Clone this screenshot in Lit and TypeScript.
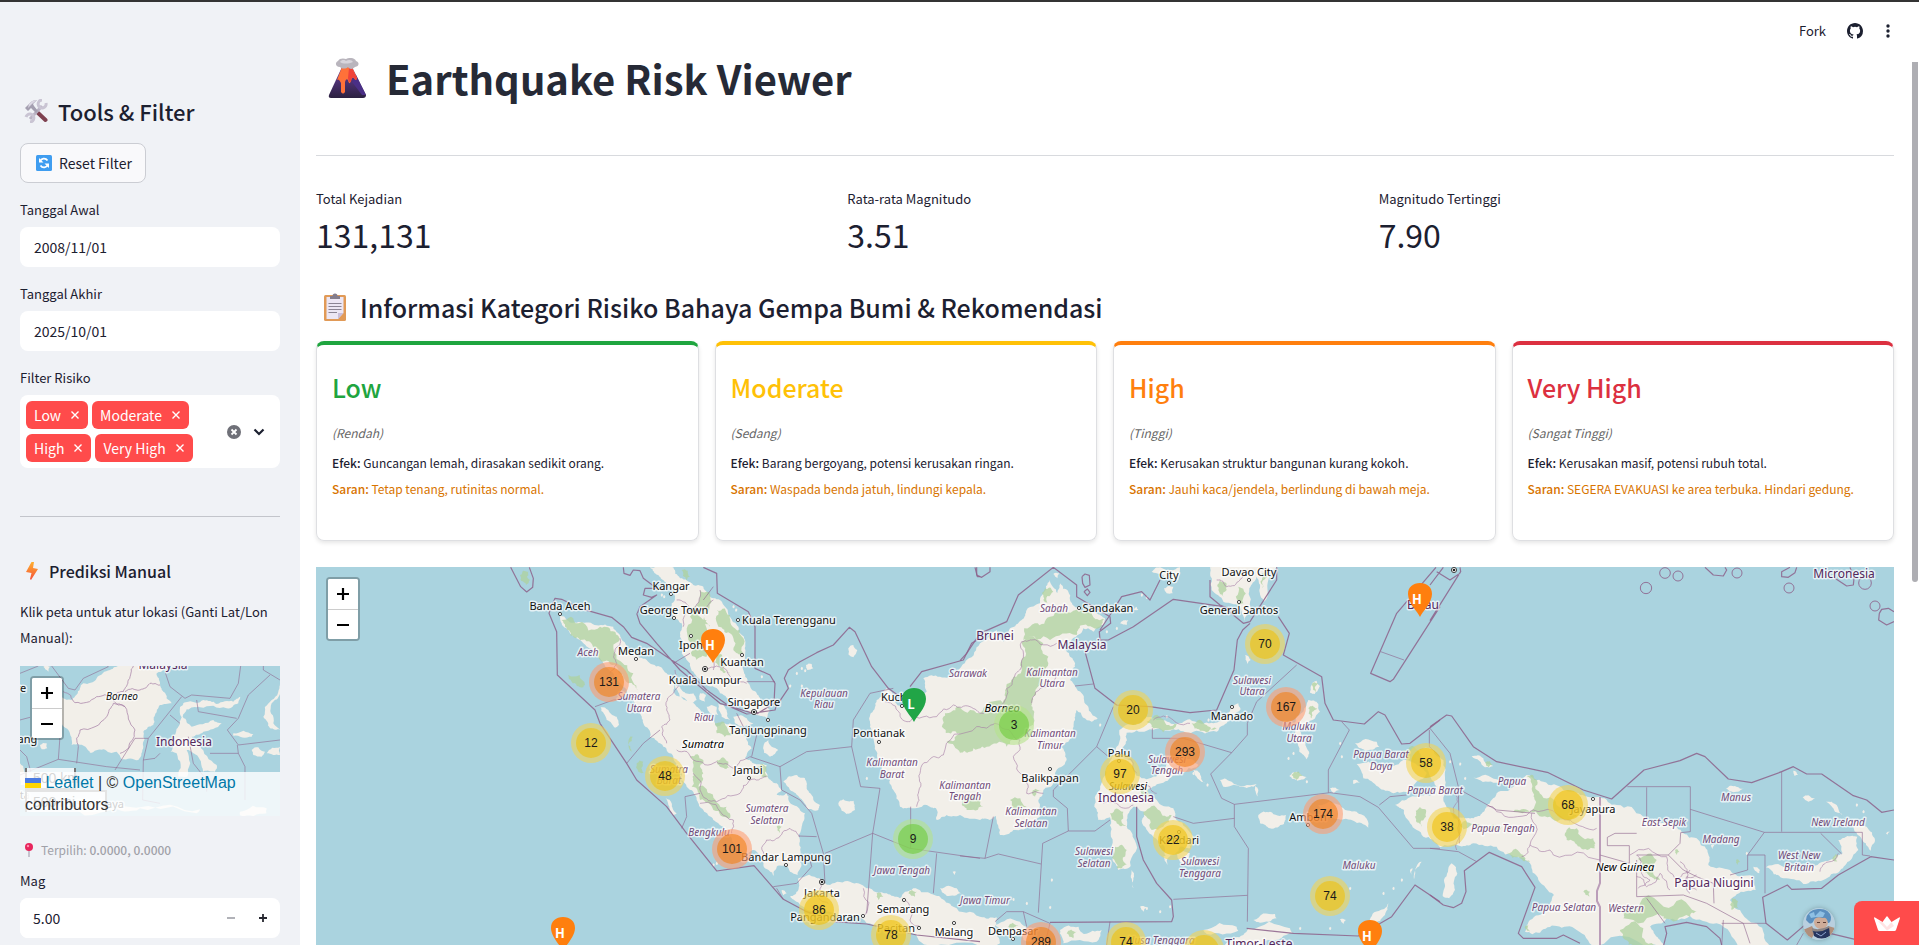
import { LitElement, html, svg, css } from "lit";
import { customElement, state } from "lit/decorators.js";

/* ---------- map geometry helpers ---------- */

// Each sheet is a 3x survey tile; ox/oy is its origin on the map plane.
type Sheet = { ox: number; oy: number };
const WEST: Sheet = { ox: 500, oy: 560 };
const MID: Sheet = { ox: 960, oy: 560 };
const EAST: Sheet = { ox: 1430, oy: 560 };
const CENTER_X = 1105;
const TOP_Y = 567;

const px = (s: Sheet, x: number) => Math.round(s.ox + x / 3 - CENTER_X);
const py = (s: Sheet, y: number) => Math.round(s.oy + y / 3 - TOP_Y);

function parse(points: string): number[][] {
  return points.trim().split(/\s+/).map((p) => p.split(",").map(Number));
}

// Midpoint displacement gives the hand-placed outlines a natural shoreline.
function coast(points: string, closed = true, rough = 0.16): string {
  let pts = parse(points);
  let seed = 7;
  const rnd = () => {
    seed = (seed * 16807) % 2147483647;
    return seed / 2147483647 - 0.5;
  };
  for (let level = 0; level < 3; level++) {
    const next: number[][] = [];
    for (let i = 0; i < pts.length; i++) {
      const a = pts[i];
      next.push(a);
      if (!closed && i === pts.length - 1) break;
      const b = pts[(i + 1) % pts.length];
      const dx = b[0] - a[0];
      const dy = b[1] - a[1];
      if (Math.hypot(dx, dy) < 7) continue;
      const k = rnd() * rough * 2;
      next.push([(a[0] + b[0]) / 2 - dy * k, (a[1] + b[1]) / 2 + dx * k]);
    }
    pts = next;
  }
  return "M" + pts.map((p) => p.map((n) => n.toFixed(1)).join(" ")).join("L") + (closed ? "Z" : "");
}
const line = (points: string) => "M" + parse(points).map((p) => p.join(" ")).join("L");

const land: [Sheet, string[]][] = [
  [WEST, [
    "180,165 200,180 240,186 290,196 340,200 360,225 380,262 400,280 440,300 480,320 500,340 525,360 520,390 555,420 590,440 610,462 640,470 650,500 690,490 720,500 740,540 755,565 735,595 760,610 800,615 805,655 830,670 845,690 830,705 860,700 880,735 915,760 905,800 898,850 900,900 893,945 870,935 860,910 830,920 822,948 790,915 780,890 760,870 730,880 700,850 670,800 640,780 610,750 590,720 560,680 545,640 520,590 490,560 450,530 430,490 420,450 400,420 370,380 340,340 310,310 280,270 250,250 210,220 185,190",
    "450,22 520,22 540,55 580,75 610,80 640,115 660,120 690,170 715,200 735,240 735,290 730,330 745,370 770,400 785,430 810,450 800,475 770,465 740,450 700,425 660,400 620,375 590,350 570,310 545,280 540,230 545,190 520,170 515,130 525,95 500,70 475,45",
    "525,375 550,395 580,400 590,420 570,430 540,410", "600,400 618,405 615,425 598,418",
    "620,440 650,440 655,465 630,460", "655,430 680,450 690,480 665,470", "700,470 740,475 760,490 730,500 705,490",
    "850,665 890,645 915,655 922,690 940,720 960,735 955,750 920,745 900,715 870,690",
    "1015,730 1030,718 1060,722 1065,750 1040,762 1025,752",
    "302,442 325,450 350,470 357,495 345,503 320,480", "497,715 515,730 530,760 520,765 505,735",
    "1045,265 1060,255 1072,270 1060,292 1046,285", "790,560 805,540 815,560 835,570 810,590 792,578",
    "918,315 935,312 940,325 922,330", "790,510 800,508 802,516 791,518",
    "895,955 960,955 990,975 1050,965 1100,985 1160,1000 1200,1015 1215,995 1240,985 1290,1000 1320,1010 1360,1040 1440,1070 1490,1072 1482,1110 1500,1150 1485,1160 1300,1158 1240,1120 1170,1105 1100,1090 1020,1068 950,1055 900,1035 870,1010 895,990",
    "1320,985 1370,985 1385,1000 1340,1008", "845,990 860,1000 850,1006", "1358,935 1368,935 1365,945",
  ]],
  [MID, [
    "-175,440 -195,425 -220,385 -250,420 -268,460 -270,500 -255,560 -245,600 -215,650 -200,690 -180,740 -140,745 -100,735 -72,745 -70,780 -40,765 0,765 60,780 90,780 108,768 120,825 160,810 220,795 240,770 235,720 250,690 280,670 285,640 320,600 300,560 340,520 345,480 350,450 395,485 413,476 385,440 365,400 330,360 345,320 330,290 305,255 345,232 370,205 400,215 432,192 435,175 410,160 360,150 330,120 325,95 300,70 292,100 270,60 250,100 240,130 200,150 185,180 150,205 130,245 110,210 60,250 20,300 0,325 -30,350 -60,350 -110,355 -100,395 -120,430",
    "478,510 520,495 560,470 590,480 640,492 690,478 720,490 760,490 800,470 812,440 835,430 842,448 800,490 770,515 700,515 640,508 560,512 500,518 490,560 478,590 510,600 545,655 600,640 650,595 700,600 715,615 660,640 610,668 562,690 590,720 640,745 650,780 700,830 690,865 660,860 622,895 610,855 580,830 545,782 552,755 520,740 500,780 518,830 512,918 475,930 458,895 452,820 450,772 415,780 403,740 420,690 432,650 452,600 470,560",
    "1045,420 1075,432 1080,455 1050,482 1022,505 1030,540 1048,580 1040,598 1018,575 1005,540 1008,470 1030,455",
    "1052,380 1070,362 1080,378 1064,402 1050,398", "895,765 930,755 978,765 972,792 930,805 900,790",
    "1075,735 1140,735 1190,755 1222,780 1225,803 1180,782 1120,775 1085,765", "780,660 815,665 890,672 880,680 840,680 790,680",
    "885,678 895,690 895,712 888,700", "988,648 1010,635 1045,650 1012,662", "700,630 720,640 735,670 712,655",
    "750,22 950,22 925,60 912,125 898,90 890,50 868,85 870,150 852,190 832,135 790,125 755,90", "575,35 600,22 660,22 655,60 625,55",
    "612,85 640,80 638,100 620,100", "480,190 505,180 500,195", "522,150 530,140 535,150", "280,42 298,40 292,55", "855,285 872,300 862,312",
    "1185,550 1250,545 1258,560 1215,572", "1190,612 1260,620 1330,600 1380,620 1400,640 1350,695 1300,700 1255,680 1210,655",
    "1180,660 1200,668 1180,672", "1110,685 1140,690 1120,700", "610,890 625,890 622,915", "650,880 690,880 685,915 660,905",
    "880,1080 945,1062 950,1075 900,1088", "1225,1085 1262,1050 1285,1030 1275,1065 1240,1095", "1375,910 1385,905 1362,958", "1350,930 1358,925 1355,945",
    "105,1095 180,1085 200,1100 160,1130 125,1115", "185,1105 225,1115 215,1145 190,1140", "300,1110 355,1100 372,1122 425,1110 410,1145 310,1150",
    "730,1110 830,1100 835,1112 740,1122", "865,1105 990,1105 1000,1120 925,1140 860,1155 790,1160 800,1148 850,1125", "1140,1078 1158,1080 1150,1092",
    "515,930 522,950 520,985 516,965", "540,1040 560,1042 550,1055",
  ]],
  [EAST, [
    "-35,570 10,570 40,600 45,660 40,720 60,750 70,775 110,775 150,768 170,738 200,700 250,680 290,645 340,665 400,690 450,705 510,710 560,735 640,770 720,785 760,820 800,835 832,870 835,915 900,930 970,950 977,990 920,1003 900,1020 930,1050 980,1090 1020,1160 925,1160 860,1090 780,1068 710,1075 660,1100 680,1130 700,1160 495,1160 440,1110 380,1098 330,1118 285,1115 300,1080 350,1050 372,1005 325,960 300,910 260,890 200,860 130,850 90,858 30,862 -20,830 -60,790 -78,750 -105,735 -60,712 0,708 20,680 -10,620",
    "65,910 82,940 75,990 58,1015 38,1008 42,960", "1008,922 1080,925 1150,920 1200,900 1238,880 1225,840 1252,828 1282,830 1285,870 1262,900 1230,932 1180,960 1120,972 1060,955",
    "1188,725 1220,735 1260,780 1310,800 1335,840 1322,872 1300,845 1270,800 1215,755", "1118,712 1135,706 1155,715 1135,725", "888,685 915,678 945,685 910,697",
    "125,588 160,595 172,612 190,618 165,622", "130,653 200,658 238,665 190,668", "970,920 990,930 988,940 975,932", "1090,632 1104,645 1094,648", "843,855 853,855 848,868",
    "1368,820 1380,815 1372,824",
  ]],
];

const forest: [Sheet, string[]][] = [
  [WEST, [
    "185,180 235,190 300,200 345,215 355,245 340,260 355,300 400,340 415,390 385,370 350,320 300,300 285,265 240,240 210,215",
    "570,170 590,130 620,180 605,250 620,290 590,300 565,240", "600,90 635,125 630,200 610,180", "650,150 690,165 720,210 730,280 700,270 690,220 655,200",
    "570,590 610,600 610,640 595,680 630,700 680,740 690,775 640,750 600,720 575,680 580,640", "645,490 680,500 720,520 700,525 650,520",
    "650,600 685,605 690,625 660,620", "770,620 800,620 805,650 785,650", "60,45 85,35 90,60 78,75", "205,345 255,375 250,382 215,365", "410,610 430,605 435,640 415,635",
    "648,280 670,300 690,340 660,330", "545,30 570,50 560,60", "388,535 398,530 395,575", "830,800 845,800 840,820", "1225,1000 1250,995 1245,1010", "1130,1000 1150,1010 1135,1020",
  ]],
  [MID, [
    "185,245 250,250 265,290 250,340 228,400 215,430 222,460 180,530 140,560 80,560 30,575 0,578 -40,545 0,520 -50,505 -45,460 -10,440 60,460 130,430 135,390 160,350 185,300",
    "190,240 225,190 270,170 340,152 400,172 432,178 425,198 370,195 350,225 270,240", "255,85 280,95 262,130 250,120",
    "560,485 610,478 650,492 640,508 580,505", "695,490 740,495 770,505 720,512", "550,755 600,752 635,765 610,800 575,810", "450,760 490,755 500,800 470,790",
    "465,860 500,870 500,915 470,925", "540,690 560,685 575,705 555,712", "1055,375 1075,370 1068,398", "1045,445 1072,445 1055,475", "995,645 1035,648 1010,660",
    "1330,570 1380,575 1370,600 1345,600", "1380,740 1398,770 1385,800 1365,770", "5,720 60,720 70,740 20,750", "215,700 245,690 225,710", "150,720 200,740 170,760",
    "780,60 800,90 790,110 775,90", "835,80 850,130 835,140", "905,40 922,50 910,90", "320,1120 350,1115 340,1135", "145,1100 175,1095 160,1115",
  ]],
  [EAST, [
    "290,648 320,660 335,705 395,745 440,765 420,790 360,770 300,755 250,755 315,735 310,700", "405,820 440,805 490,835 495,865 450,860 410,840",
    "90,795 130,790 160,800 220,800 200,810 100,808", "230,878 280,885 300,905 270,895", "625,895 680,900 690,960 660,950 640,920",
    "590,1045 720,1045 700,1070 580,1075", "700,1040 800,1055 780,1070 700,1075", "570,1110 640,1105 672,1155 620,1160 580,1135", "905,1015 925,1045 905,1050",
    "285,1105 295,1095 300,1115", "165,608 190,615 175,622", "1210,890 1225,885 1222,905 1208,900", "460,995 480,995 478,1010", "735,870 748,875 740,885", "918,900 930,905 922,915",
  ]],
];

const seaLines: [Sheet, string[]][] = [
  [WEST, [
    "32,22 62,80 80,96 98,82 100,55 88,22", "150,150 165,115 185,118 240,145 335,172 370,200 395,232 440,250 500,290 560,330 620,390 690,440 740,462 825,450 828,440 865,385 853,355 865,330 900,305 950,278 1000,255 1048,202 1065,215 1115,320 1165,385 1200,410",
    "150,150 147,160 170,215 172,345 285,450 300,490 380,610 410,660 500,740 560,820 650,933 762,917 850,1018 920,1055 1000,1085 1100,1092 1250,1125 1440,1145",
    "410,160 420,190 470,250 540,330 600,380 660,430 760,460", "370,22 372,40 390,46 400,30 420,32 430,55 450,70 470,85 435,85 430,105 455,112 470,105 420,140 412,160",
    "610,22 650,40 652,100 745,155 765,200 765,325 810,345 825,370 822,430 770,462", "1230,380 1265,335 1390,300 1415,250 1440,235", "1425,22 1432,50 1440,50",
  ]],
  [MID, [
    "0,302 20,280 60,220 140,185 175,105 280,22 350,75 350,110 400,140 450,170 452,190 418,215 420,240 445,240 520,200 640,118 790,140 850,190 870,185 950,60 950,22",
    "375,275 405,385 470,435 570,440 690,458 770,450 822,330 832,240 848,210 870,190", "955,170 988,220 970,285 1085,350 1095,430 1120,480 1213,492 1255,455 1275,465 1325,552 1350,550 1440,480",
    "1428,22 1310,160 1232,340 1290,365 1300,358 1440,140", "420,210 450,165 485,110 545,95 570,120 600,60", "50,22 50,45 65,52 90,35 90,22", "366,50 375,42 388,46 390,75 375,82 368,70 366,50", "372,95 382,87 390,97 382,107 372,95",
    "750,60 750,110 780,135 840,160", "270,1087 635,1085 640,1070 635,1020 590,970 550,900 530,830 530,740", "860,1105 1000,1120 1195,1128 1295,1070 1365,975 1440,1025",
  ]],
  [EAST, [
    "0,500 50,465 65,468 130,560 200,605 355,638 460,690 545,717 642,630 750,602 800,580 825,590 895,657 965,668 1055,635 1090,620 1130,642 1175,642 1270,707 1310,720 1355,757 1392,750",
    "0,1005 40,1035 70,1043 95,1030 108,995 103,932 178,877 275,920 315,982 265,1120 280,1135 380,1135 400,1125 450,1150", "700,1160 710,1120 705,1100 770,1087 830,1100 870,1135 875,1155",
    "1392,900 1322,890 1225,945 1175,985 1085,988 1072,975 998,1012 1008,1090 1072,1140 1130,1090 1200,1120 1275,1138", "0,182 92,35 90,22", "0,75 40,22", "20,35 60,60 90,40",
    "825,22 850,45 880,48 890,30 885,22", "1080,22 1055,35 1055,50 1075,52 1095,38 1100,22", "1215,55 1250,78 1270,75 1272,55 1260,22",
    "1348,160 1355,148 1375,145 1392,155", "1348,160 1346,180 1370,195 1392,185",
  ]],
];

const adminLines: [Sheet, string[]][] = [
  [WEST, [
    "285,440 340,420 420,410", "380,610 430,550 480,510", "545,805 560,770 555,710 600,700", "820,980 890,970 935,920 930,900", "520,310 570,280", "640,80 610,120", "740,365 825,365",
    "750,590 840,620 845,690 900,720 935,760 970,880 975,970", "840,620 920,575 1055,560 1060,480 1110,400 1180,385", "1055,560 1082,680 1140,685 1118,820 975,880", "895,828 950,830", "1118,820 1230,865 1440,895",
    "1118,820 1100,1060", "1232,865 1232,740", "1310,880 1300,1000", "710,460 730,500 770,525 755,590", "850,1018 830,985",
  ]],
  [MID, [
    "0,888 75,895 115,882 243,912", "75,895 100,770", "248,850 235,1058", "248,850 325,813 405,813 450,780", "325,813 322,745 280,710 280,690 410,560 460,440", "410,560 445,590", "577,505 577,535 670,535 815,578 752,642 785,715 823,733 1110,698 1200,710 1255,742 1360,865 1440,865",
    "815,578 862,525 862,490 890,425 1010,315", "823,733 823,800 865,865 862,1085", "823,775 700,790 640,770", "640,1018 862,1006", "1105,698 1105,630 1168,510 1145,485", "1258,735 1290,710 1340,705", "1408,510 1408,560 1440,590", "1262,275 1332,300", "345,378 400,372",
    "105,1085 140,1055 190,1055 270,1090 260,1130", "450,1085 440,1155", "190,1055 200,1100",
  ]],
  [EAST, [
    "0,505 60,580 85,680 88,850", "100,695 200,750 315,760", "592,680 781,680 781,815 752,818 750,850 715,885 620,885", "650,682 650,775", "781,748 1003,817 1297,817 1297,885 1320,888", "1055,635 1055,815", "1003,817 953,885 1005,885 1005,1000",
    "953,885 953,930 900,945", "1172,820 1235,882", "0,865 85,875 140,905", "650,1015 705,1090", "875,1090 1008,1090", "620,820 555,820 532,832 532,857 598,857 598,910 510,885", "620,900 620,1010 760,1005 830,1030 940,1090 960,1150", "875,1160 880,1080",
    "715,885 760,930 800,950 850,970 852,1030", "1120,1120 1100,1155",
  ]],
];

const innerLines: [Sheet, string[]][] = [
  [WEST, [
    "360,235 345,270 350,310 330,340", "525,330 520,400 500,450 510,480 485,500 500,550", "530,570 580,600 650,605 700,625 750,590", "580,640 600,690 650,725 720,700 750,660 800,650", "600,730 680,770 700,780 695,820",
    "790,890 800,840 830,835 870,805 900,830", "530,120 570,150 640,120", "600,90 570,150 550,200", "620,330 680,330 740,370", "600,250 640,330",
    "960,955 950,1000 985,1030", "1090,985 1090,1070", "1215,1020 1230,1080 1260,1100",
  ]],
  [MID, [
    "-225,425 -180,470 -150,485 -70,470 -20,435 30,440 70,460 130,430 140,385 165,345 185,320 185,245 215,240 290,250", "-50,585 -80,590 -120,640 -125,700 -130,740", "-50,585 50,500 105,490 180,540",
    "180,540 160,590 200,650 200,700 250,700", "215,430 260,380 290,330", "480,590 520,610 530,640", "590,700 570,680 530,690", "430,730 480,740 520,735", "770,60 800,80 840,60 860,40", "580,480 640,480 690,490",
  ]],
  [EAST, [
    "170,738 200,755 300,755 310,750 420,780 500,805", "305,760 300,855 360,870 370,885 510,900", "300,855 275,890", "75,700 70,750 85,780 80,870", "620,950 650,980 690,940 720,990", "600,885 710,890 740,960 780,930",
    "620,885 630,930 660,960 625,985", "750,905 770,960 800,990", "1170,935 1200,905 1225,880", "780,1000 770,950 800,945",
  ]],
];

const islets: [Sheet, string][] = [
  [WEST, "890,340 905,325 915,332 870,378 905,378 785,350 640,915 650,910 1100,655 485,105 492,110 700,140 708,150 620,395 430,270"],
  [MID, "545,105 560,112 495,185 470,205 440,215 380,160 700,640 742,675 1140,550 1145,590 1000,580 985,595 1110,1105 1020,1105 1300,985 1270,1000 1325,960 1170,985 275,960 160,1018 200,1030 270,1042 560,1045 630,1040 600,1055 420,495 620,470 745,480 1040,665 1190,905"],
  [EAST, "90,612 60,605 1300,755 1040,940 1280,735 105,655 950,880"],
];

type Label = [Sheet, string, number, number, string];
const labels: Label[] = [
  [WEST, "Kangar", 512, 90, "city"], [WEST, "Banda Aceh", 180, 151, "city"], [WEST, "George Town", 522, 161, "city"],
  [WEST, "Kuala Terengganu", 866, 192, "city"], [WEST, "Ipoh", 573, 266, "city"], [WEST, "Medan", 409, 286, "city"],
  [WEST, "Kuantan", 726, 318, "city"], [WEST, "Kuala Lumpur", 615, 372, "city"], [WEST, "Singapore", 763, 437, "city"],
  [WEST, "Tanjungpinang", 803, 523, "city"], [WEST, "Sumatra", 610, 565, "island"], [WEST, "Jambi", 745, 642, "city"],
  [WEST, "Bandar Lampung", 858, 903, "city"], [WEST, "Jakarta", 965, 1012, "city"], [WEST, "Pangandaran", 974, 1082, "city"],
  [WEST, "Pacitan", 1188, 1116, "city"], [WEST, "Semarang", 1210, 1059, "city"], [WEST, "Malang", 1362, 1127, "city"],
  [WEST, "Kuching", 1205, 424, "city"], [WEST, "Pontianak", 1138, 532, "city"],
  [WEST, "Aceh", 263, 289, "region"], [WEST, "Sumatera", 416, 421, "region"], [WEST, "Utara", 416, 456, "region"],
  [WEST, "Riau", 613, 482, "region"], [WEST, "Kepulauan", 973, 410, "region"], [WEST, "Riau", 973, 445, "region"],
  [WEST, "Sumatra", 508, 638, "region"], [WEST, "Barat", 508, 673, "region"], [WEST, "Sumatera", 800, 757, "region"],
  [WEST, "Selatan", 800, 792, "region"], [WEST, "Bengkulu", 626, 828, "region"], [WEST, "Kalimantan", 1177, 618, "region"],
  [WEST, "Barat", 1177, 653, "region"], [WEST, "Jawa Tengah", 1206, 941, "region"],
  [MID, "Kalimantan", 15, 686, "region"], [MID, "Tengah", 15, 721, "region"], [MID, "Sarawak", 23, 350, "region"],
  [MID, "City", 627, 58, "city"], [MID, "Davao City", 868, 48, "city"], [MID, "Sandakan", 444, 156, "city"],
  [MID, "General Santos", 838, 162, "city"], [MID, "Sabah", 282, 155, "region"], [MID, "Brunei", 106, 241, "country"],
  [MID, "Malaysia", 367, 267, "country"], [MID, "Kalimantan", 275, 348, "region"], [MID, "Utara", 275, 382, "region"],
  [MID, "Borneo", 126, 456, "island"], [MID, "Kalimantan", 271, 532, "region"], [MID, "Timur", 271, 567, "region"],
  [MID, "Balikpapan", 270, 666, "city"], [MID, "Kalimantan", 212, 765, "region"], [MID, "Selatan", 212, 800, "region"],
  [MID, "Palu", 476, 591, "city"], [MID, "Sulawesi", 620, 608, "region"], [MID, "Tengah", 620, 643, "region"],
  [MID, "Sulawesi", 504, 690, "isle"], [MID, "Indonesia", 499, 727, "country"], [MID, "Sulawesi", 875, 371, "region"],
  [MID, "Utara", 875, 406, "region"], [MID, "Manado", 816, 479, "city"], [MID, "Maluku", 1016, 511, "region"],
  [MID, "Utara", 1016, 546, "region"], [MID, "Kendari", 657, 853, "city"], [MID, "Sulawesi", 402, 885, "region"],
  [MID, "Selatan", 402, 920, "region"], [MID, "Sulawesi", 719, 915, "region"], [MID, "Tenggara", 719, 950, "region"],
  [MID, "Ambon", 1043, 783, "city"], [MID, "Maluku", 1198, 928, "region"], [MID, "Papua Barat", 1262, 594, "region"],
  [MID, "Daya", 1262, 629, "region"], [MID, "Papua Barat", 1425, 701, "region"], [MID, "Jawa Timur", 76, 1033, "region"],
  [MID, "Denpasar", 158, 1124, "city"], [MID, "Nusa Tenggara", 602, 1153, "region"], [MID, "Timor-Leste", 896, 1163, "country"],
  [MID, "Belau", 1388, 146, "country"],
  [EAST, "Micronesia", 1241, 54, "country"], [EAST, "Papua", 246, 675, "region"], [EAST, "Jayapura", 488, 758, "city"],
  [EAST, "Papua Tengah", 220, 815, "region"], [EAST, "East Sepik", 701, 799, "region"], [EAST, "Madang", 872, 848, "region"],
  [EAST, "Manus", 918, 724, "region"], [EAST, "New Ireland", 1225, 799, "region"], [EAST, "West New", 1106, 898, "region"],
  [EAST, "Britain", 1106, 934, "region"], [EAST, "New Guinea", 586, 933, "island"], [EAST, "Papua Niugini", 853, 982, "country"],
  [EAST, "Papua Selatan", 401, 1053, "region"], [EAST, "Western", 588, 1055, "region"],
];

const townDots: [Sheet, number, number, boolean][] = [
  [WEST, 180, 162, false], [WEST, 513, 102, false], [WEST, 522, 175, false], [WEST, 714, 180, false], [WEST, 573, 229, false],
  [WEST, 408, 297, false], [WEST, 726, 286, false], [WEST, 615, 327, true], [WEST, 762, 456, true], [WEST, 804, 481, false],
  [WEST, 747, 654, false], [WEST, 858, 915, false], [WEST, 965, 966, true], [WEST, 1089, 1068, false], [WEST, 1212, 1020, false],
  [WEST, 1257, 1104, false], [WEST, 1362, 1089, false], [WEST, 1205, 437, false], [WEST, 1137, 546, false],
  [MID, 357, 144, false], [MID, 627, 70, false], [MID, 867, 60, false], [MID, 837, 126, false], [MID, 816, 440, false],
  [MID, 270, 627, false], [MID, 477, 603, false], [MID, 657, 816, false], [MID, 1044, 795, false], [MID, 159, 1137, false],
  [EAST, 489, 717, false], [EAST, 72, 30, true],
];

const atolls: [number, number, number][] = [
  [704, 40, 16], [744, 47, 15], [648, 85, 17], [920, 39, 15], [1076, 85, 15], [1305, 70, 19], [1336, 138, 15],
];

const clusters: [Sheet, number, number, string][] = [
  [WEST, 327, 366, "131"], [WEST, 273, 549, "12"], [WEST, 495, 648, "48"], [WEST, 696, 867, "101"], [WEST, 957, 1050, "86"],
  [WEST, 1173, 1125, "78"], [WEST, 1239, 837, "9"], [MID, 915, 252, "70"], [MID, 519, 450, "20"], [MID, 162, 495, "3"],
  [MID, 675, 576, "293"], [MID, 480, 642, "97"], [MID, 978, 441, "167"], [MID, 1089, 762, "174"], [MID, 639, 840, "22"],
  [MID, 1110, 1008, "74"], [MID, 1398, 609, "58"], [MID, 243, 1146, "289"], [MID, 498, 1146, "74"], [MID, 732, 1170, "41"],
  [EAST, 51, 801, "38"], [EAST, 414, 735, "68"],
];

const pins: [Sheet, number, number, string][] = [
  [WEST, 639, 207, "H"], [WEST, 189, 1071, "H"], [WEST, 1242, 384, "L"], [MID, 1380, 69, "H"], [MID, 1230, 1080, "H"],
];

const sheetPaths = (sets: [Sheet, string[]][], cls: string, draw: (p: string) => string) =>
  sets.map(([s, ps]) => svg`<path class=${cls} transform="translate(${s.ox - CENTER_X} ${s.oy - TOP_Y}) scale(.33333)" d=${ps.map(draw).join("")}></path>`);

/* ---------- zoom control ---------- */

@customElement("zoom-control")
export class ZoomControl extends LitElement {
  static styles = css`
    :host { display: block; }
    .bar { width: 30px; border: 2px solid rgba(0, 0, 0, 0.25); border-radius: 4px; background: #fff; background-clip: padding-box; overflow: hidden; }
    button { display: grid; place-items: center; width: 30px; height: 30px; padding: 0; border: 0; background: #fff; }
    button + button { border-top: 1px solid #ccc; }
    svg { width: 14px; height: 14px; fill: none; stroke: #000; stroke-width: 2.2; }
  `;
  render() {
    return html`<div class="bar">
      <button aria-label="Zoom in"><svg viewBox="0 0 14 14"><path d="M1 7H13M7 1V13" /></svg></button>
      <button aria-label="Zoom out"><svg viewBox="0 0 14 14"><path d="M1 7H13" /></svg></button>
    </div>`;
  }
}

/* ---------- main risk map ---------- */

@customElement("risk-map")
export class RiskMap extends LitElement {
  static styles = css`
    :host { display: block; position: relative; overflow: hidden; background: #aad3df; font-family: "Liberation Sans", Arial, sans-serif; }
    .plane { position: absolute; left: 50%; top: 0; width: 1px; height: 1px; overflow: visible; }
    .zoom { position: absolute; left: 10px; top: 10px; }
    .land { fill: #f2efe9; }
    .forest { fill: #add19e; opacity: 0.75; }
    .sea { fill: none; stroke: #8d618b; stroke-width: 3.6; stroke-linejoin: round; opacity: 0.85; }
    .admin { fill: none; stroke: #8d618b; stroke-width: 2.6; opacity: 0.7; }
    .inner { fill: none; stroke: #a47ba4; stroke-width: 3; opacity: 0.6; }
    .frontier { fill: none; stroke: #a47ba4; stroke-width: 2; opacity: 0.7; }
    .atoll { fill: none; stroke: #8d618b; stroke-width: 1; opacity: 0.85; }
    .dot { fill: #fff; stroke: #444; stroke-width: 1; }
    .core { fill: #222; }
    text { font-family: "Noto Sans", sans-serif; font-size: 11px; text-anchor: middle; paint-order: stroke; stroke: rgba(255, 255, 255, 0.7); stroke-width: 3px; stroke-linejoin: round; fill: #111; }
    .region { font-size: 10px; font-style: italic; fill: #714c78; }
    .country { font-size: 12px; fill: #54285c; }
    .island { font-size: 11px; font-style: italic; fill: #000; }
    .isle { font-size: 10px; font-style: italic; fill: #000; }
    .cluster { position: absolute; display: grid; place-items: center; width: 40px; height: 40px; margin: -20px 0 0 -20px; padding: 0; border: 0; border-radius: 50%; font: 12px "Liberation Sans", Arial, sans-serif; color: #1a1a1a; }
    .cluster span { display: grid; place-items: center; width: 30px; height: 30px; border-radius: 50%; }
    .small { background: rgba(181, 226, 140, 0.6); }
    .small span { background: rgba(110, 204, 57, 0.6); }
    .medium { background: rgba(241, 211, 87, 0.6); }
    .medium span { background: rgba(240, 194, 12, 0.6); }
    .large { background: rgba(253, 156, 115, 0.6); }
    .large span { background: rgba(241, 128, 23, 0.6); }
    .pin { position: absolute; width: 24px; height: 34px; margin-left: -12px; padding: 0; border: 0; background: none; display: grid; }
    .pin svg { grid-area: 1 / 1; width: 24px; height: 34px; fill: #ff7f0e; }
    .pin.low svg { fill: #21a547; }
    .pin span { grid-area: 1 / 1; padding: 9px 6px 0 0; font: 700 13px/14px "Noto Sans CJK SC", sans-serif; color: #fff; }
  `;
  render() {
    return html`
      <svg class="plane" aria-label="Peta risiko">
        ${sheetPaths(land, "land", (p) => coast(p))}
        ${islets.map(([s, p]) => svg`<path class="land" transform="translate(${s.ox - CENTER_X} ${s.oy - TOP_Y}) scale(.33333)" d=${parse(p).map(([x, y]) => `M${x - 3} ${y}l3 -5 4 3 -1 6 -4 1z`).join("")}></path>`)}
        ${sheetPaths(forest, "forest", (p) => coast(p, true, 0.3))}
        ${sheetPaths(innerLines, "inner", (p) => coast(p, false, 0.2))}
        ${sheetPaths(adminLines, "admin", line)}
        ${sheetPaths(seaLines, "sea", line)}
        <path class="frontier" d="M495 230V316L492 324V334L495 340V378" />
        ${atolls.map(([x, y, r]) => svg`<circle class="atoll" cx=${px(EAST, x)} cy=${py(EAST, y)} r=${r / 3}></circle>`)}
        ${townDots.map(([s, x, y, capital]) => svg`<circle class="dot" cx=${px(s, x)} cy=${py(s, y)} r=${capital ? 2.6 : 1.6}></circle>${capital ? svg`<circle class="core" cx=${px(s, x)} cy=${py(s, y)} r="1.3"></circle>` : null}`)}
        ${labels.map(([s, t, x, y, kind]) => svg`<text class=${kind} x=${px(s, x)} y=${py(s, y)}>${t}</text>`)}
      </svg>
      ${clusters.map(([s, x, y, n]) => {
        const size = +n >= 100 ? "large" : +n >= 10 ? "medium" : "small";
        return html`<button class="cluster ${size}" style="left:calc(50% + ${px(s, x)}px);top:${py(s, y)}px"><span>${n}</span></button>`;
      })}
      ${pins.map(([s, x, y, t]) => html`<button class="pin ${t === "L" ? "low" : ""}" style="left:calc(50% + ${px(s, x)}px);top:${py(s, y)}px">
        <svg viewBox="0 0 24 34"><path d="M12 34C10 29 0 20 0 11C0 4 5 0 12 0S24 4 24 11C24 20 14 29 12 34Z" /></svg><span>${t}</span></button>`)}
      <zoom-control class="zoom"></zoom-control>
    `;
  }
}

/* ---------- sidebar location picker ---------- */

@customElement("pick-map")
export class PickMap extends LitElement {
  static styles = css`
    :host { display: block; position: relative; height: 150px; overflow: hidden; background: #aad3df; }
    .plane { position: absolute; left: 0; top: 0; width: 260px; height: 150px; }
    .zoom { position: absolute; left: 10px; top: 10px; }
    .land { fill: #f2efe9; }
    .admin { fill: none; stroke: #8d618b; stroke-width: 2.4; opacity: 0.7; }
    .inner { fill: none; stroke: #a47ba4; stroke-width: 3; opacity: 0.7; }
    text { font-family: "Noto Sans", sans-serif; font-size: 11px; text-anchor: middle; paint-order: stroke; stroke: rgba(255, 255, 255, 0.7); stroke-width: 3px; stroke-linejoin: round; fill: #111; }
    .country { font-size: 12px; fill: #54285c; }
    .island { font-size: 10px; font-style: italic; }
    .scale { position: absolute; left: 5px; top: 102px; font: 14px/20px "Liberation Sans", Arial, sans-serif; color: #333; }
    .scale div { box-sizing: border-box; padding-left: 6px; border: 2px solid #777; border-top: 0; background: rgba(255, 255, 255, 0.8); white-space: nowrap; }
    .km { width: 51px; }
    .scale .mi { width: 82px; border-top: 2px solid #777; border-bottom: 0; }
    .credit { position: absolute; left: 0; right: 0; bottom: 0; padding: 0 5px; background: rgba(255, 255, 255, 0.8); font: 16px/22px "Liberation Sans", Arial, sans-serif; color: #333; }
    .credit a { color: #0078a8; text-decoration: none; }
    .flag { width: 16px; height: 10px; }
  `;
  render() {
    const shores = [
      "240,655 250,640 290,625 330,600 360,588 520,588 470,610 480,640 490,665 515,700 480,705 465,735 460,765 430,785 430,830 415,870 365,868 350,845 310,838 270,848 260,835 215,825 205,780 180,750 185,680 215,690",
      "540,712 565,695 610,690 650,702 700,695 725,672 715,700 680,715 600,712 560,718 548,740 575,770 640,750 665,760 610,785 575,800 600,825 650,885 645,905 610,905 600,870 580,850 560,840 562,920 535,920 530,850 512,845 520,800 535,770",
      "790,740 815,690 840,640 840,672 815,700 820,760 840,780 810,775", "700,790 760,793 755,800 700,797", "755,840 775,832 795,845 785,860 760,855", "800,850 840,830 840,855",
      "60,880 72,900 95,940 62,945", "120,825 140,820 142,835 125,838", "200,1005 330,1010 420,1015 600,1018 590,1030 300,1028 120,1015", "720,1025 800,1015 800,1030 720,1036", "130,590 150,590 145,605",
    ];
    const borders = [
      "60,610 115,588", "155,588 205,655 225,660 250,625 325,590 322,588", "495,605 510,650 555,685 575,675 690,685 715,640 722,588", "790,588 790,600 840,630", "810,615 745,675 715,745 682,780 715,825 840,810",
      "545,680 445,805 430,870 428,990 480,1000", "510,735 540,760", "445,805 405,805 345,900", "630,850 715,850 712,825", "430,870 465,865 480,850", "180,800 175,868 60,915", "230,880 235,830", "175,868 320,890 420,900", "60,750 90,742", "565,800 580,880 620,930 620,965", "715,850 735,890 735,990", "590,690 595,725 710,745", "60,840 80,860 95,915",
    ];
    const at = (x: number, y: number) => ({ x: Math.round((x - 60) / 3), y: Math.round((y - 588) / 3) });
    const names: [string, number, number, string][] = [
      ["Malaysia", 488, 598, "country"], ["Borneo", 367, 690, "island"], ["Indonesia", 553, 828, "country"], ["Singapore", 0, 665, ""], ["Palembang", 24, 818, ""], ["Jakarta", 35, 988, ""], ["Surabaya", 300, 1014, ""],
    ];
    return html`
      <svg class="plane" viewBox="0 0 260 150" aria-label="Peta lokasi">
        <g transform="translate(-20 -196) scale(.33333)">
          <path class="land" d=${shores.map((p) => coast(p)).join("")} />
          <path class="inner" d=${["190,665 225,698 290,680 340,675 370,665 385,630 400,588", "235,830 240,780 320,740 340,700 375,710 405,780 400,805", "375,665 420,660 450,640 480,645", "375,710 340,690", "400,805 360,850"].map((p) => coast(p, false, 0.15)).join("")} />
          <path class="admin" d=${borders.map(line).join("")} />
        </g>
        ${names.map(([t, x, y, k]) => svg`<text class=${k} x=${at(x, y).x} y=${at(x, y).y}>${t}</text>`)}
      </svg>
      <div class="scale"><div class="km">500 km</div><div class="mi">500 mi</div></div>
      <div class="credit"><svg class="flag" viewBox="0 0 16 10"><path fill="#4c7be1" d="M0 0H16V5H0Z" /><path fill="#ffd500" d="M0 5H16V10H0Z" /></svg>
        <a href="#leaflet">Leaflet</a> | © <a href="#osm">OpenStreetMap</a> contributors</div>
      <zoom-control class="zoom"></zoom-control>
    `;
  }
}

/* ---------- pictograms ---------- */

const volcano = html`<svg class="pic title-pic" viewBox="0 0 38 40" aria-hidden="true">
  <defs><linearGradient id="rock" x2="0" y2="1"><stop stop-color="#6b3fa0" /><stop offset="1" stop-color="#2b2140" /></linearGradient></defs>
  <path fill="url(#rock)" d="M14 9H24L38 37Q38 40 35 40H3Q0 40 1 37Z" />
  <path fill="#4a2f86" d="M24 24L34 37H38L28 17Z" />
  <path fill="#ff7139" d="M14 9L24 9L29 20Q28 24 26 20Q24 18 23 23Q21 28 20 22Q18 20 17 24V34Q15 37 13 34V25Q11 20 9 22Z" />
  <path fill="#f0423a" d="M21 10H24L29 20Q28 24 26 20Q24 18 23 23Q21 26 20 20Z" />
  <path fill="#b9b5bd" d="M12 9C7 9 7 4 10 3C11 0 16 0 18 1C22 -1 27 0 28 3C32 4 31 9 27 9C24 12 21 11 20 9C18 11 14 11 12 9Z" />
  <path fill="#d8d5dc" d="M12 4C14 1 17 2 18 3C21 1 24 2 25 4C20 6 15 6 12 4Z" /></svg>`;
const tools = html`<svg class="pic" viewBox="0 0 24 24" aria-hidden="true">
  <path stroke="#7e4150" stroke-width="4" stroke-linecap="round" d="M13 13L21.500 21" />
  <path stroke="#b9b3c4" stroke-width="3" d="M6 20L18 7" /><path fill="none" stroke="#c9c4d3" stroke-width="3" d="M22 4A4 4 0 1 1 18 1M2 18A4 4 0 1 1 6 23" />
  <path fill="#a49fb0" d="M1 9L5 5Q8 1 13 1L9 5L10 7L14 12L12 14L7 9L4 12Z" /><path fill="#dcd8e4" d="M5 5Q8 1 13 1L8 5L4 9Z" /></svg>`;
const refresh = html`<svg class="pic-sm" viewBox="0 0 16 16" aria-hidden="true"><rect width="16" height="16" rx="1.500" fill="#3f9df0" />
  <path fill="none" stroke="#fff" stroke-width="1.700" d="M4 6.500A4.200 4.200 0 0 1 11.500 5.500M12 9.500A4.200 4.200 0 0 1 4.500 10.500" /><path fill="#fff" d="M3 3V7.500H7.500ZM13 13V8.500H8.500Z" /></svg>`;
const clipboard = html`<svg class="pic" viewBox="0 0 22 28" aria-hidden="true"><rect y="2" width="22" height="26" rx="1.500" fill="#e19a57" />
  <path fill="#ece6f4" d="M2.500 4H19.500V20L14 26H2.500Z" /><path fill="#c9bedb" d="M14 26V20H19.500Z" />
  <path fill="#847d8c" d="M6 6V3H8.500A2.500 2.500 0 0 1 13.500 3H16V6Z" /><path stroke="#8b8494" d="M4.500 10.500H17.500M4.500 13.500H17.500M4.500 16.500H17.500M4.500 19.500H13" /></svg>`;
const bolt = html`<svg class="bolt" viewBox="0 0 12 18" aria-hidden="true"><defs><linearGradient id="fl" x2="0" y2="1"><stop stop-color="#ffb02e" /><stop offset="1" stop-color="#f4503b" /></linearGradient></defs>
  <path fill="url(#fl)" d="M5.500 0H8L7 6L12 7L5 18L4 17L5.500 11L0 10Z" /></svg>`;
const pushpin = html`<svg class="push" viewBox="0 0 8 14" aria-hidden="true"><path stroke="#9b93a5" d="M4 6V14" /><circle cx="4" cy="4" r="4" fill="#e8265d" /><circle cx="3" cy="3" r="1.200" fill="#ff8fb0" /></svg>`;

const cross = html`<svg class="x" viewBox="0 0 8 8" aria-hidden="true"><path d="M0.500 0.500L7.500 7.500M7.500 0.500L0.500 7.500" /></svg>`;

const risks = [
  { tone: "low", name: "Low", local: "(Rendah)", effect: "Guncangan lemah, dirasakan sedikit orang.", advice: "Tetap tenang, rutinitas normal." },
  { tone: "moderate", name: "Moderate", local: "(Sedang)", effect: "Barang bergoyang, potensi kerusakan ringan.", advice: "Waspada benda jatuh, lindungi kepala." },
  { tone: "high", name: "High", local: "(Tinggi)", effect: "Kerusakan struktur bangunan kurang kokoh.", advice: "Jauhi kaca/jendela, berlindung di bawah meja." },
  { tone: "extreme", name: "Very High", local: "(Sangat Tinggi)", effect: "Kerusakan masif, potensi rubuh total.", advice: "SEGERA EVAKUASI ke area terbuka. Hindari gedung." },
];
const metrics = [["Total Kejadian", "131,131"], ["Rata-rata Magnitudo", "3.51"], ["Magnitudo Tertinggi", "7.90"]];

/* ---------- application ---------- */

@customElement("app-root")
export class AppRoot extends LitElement {
  @state() private tags = ["Low", "Moderate", "High", "Very High"];

  static styles = css`
    :host { display: grid; grid-template-columns: 300px 1fr; position: relative; height: 100vh; overflow: hidden; box-sizing: border-box; border-top: 2px solid #343434; background: #fff; color: #1c2030; font-family: "Noto Sans CJK SC", "Open Sans", sans-serif; font-size: 14px; }
    h1, h2, h3, p { margin: 0; }
    button, input { font-family: inherit; color: inherit; }
    .side { padding: 93px 20px 0; background: #f0f2f6; overflow: hidden; }
    .side h2 { display: flex; align-items: center; gap: 10px; padding-left: 4px; font-size: 22px; line-height: 32px; font-weight: 500; }
    .side h2 .pic { width: 24px; height: 24px; }
    .reset { display: flex; align-items: center; gap: 7px; height: 40px; margin-top: 16px; padding: 0 13px 0 15px; border: 1px solid #cbcdd3; border-radius: 8px; background: #f9f9fb; font-size: 14px; }
    .pic-sm { width: 16px; height: 16px; }
    .field { display: block; margin: 16px 0 6px; font-size: 13px; line-height: 22px; }
    .box { box-sizing: border-box; width: 100%; height: 40px; padding: 0 14px; border: 0; border-radius: 8px; background: #fff; font-size: 14px; outline: 0; }
    .multi { display: flex; align-items: center; gap: 12px; padding: 6px 15px 6px 6px; border-radius: 8px; background: #fff; }
    .tags { display: flex; flex: 1; flex-wrap: wrap; gap: 5px 4px; }
    .tag { display: flex; align-items: center; gap: 10px; height: 28px; padding: 0 9px 0 8px; border-radius: 6px; background: #ff4b4b; color: #fff; font-size: 14px; }
    .tag button { display: grid; padding: 0; border: 0; background: none; }
    .x { width: 8px; height: 8px; fill: none; stroke: currentColor; stroke-width: 1.4; }
    .icon { display: grid; padding: 0; border: 0; background: none; }
    .clear { width: 14px; height: 14px; }
    .chev { width: 12px; height: 8px; }
    .rule { height: 1px; border: 0; margin: 0; background: #d8dade; }
    .side .rule { margin: 48px 0 40px; background: #c3c5cb; }
    .side h3 { display: flex; align-items: center; gap: 11px; padding-left: 6px; font-size: 16px; line-height: 28px; font-weight: 500; }
    .bolt { width: 12px; height: 18px; }
    .hint { margin: 14px 0 15px; font-size: 13px; line-height: 26px; }
    .picked { display: flex; align-items: center; gap: 8px; margin-top: 22px; padding-left: 5px; font-size: 12px; line-height: 24px; color: #a0a1a8; }
    .push { width: 8px; height: 14px; }
    .side .mag { margin-top: 8px; }
    .number { display: flex; align-items: center; gap: 24px; padding-right: 13px; border-radius: 8px; background: #fff; }
    .number .box { flex: 1; min-width: 0; padding: 0 13px; }
    .step { width: 8px; height: 8px; fill: none; stroke: #262730; stroke-width: 1.8; }
    .step.off { stroke: #a9aab0; }

    .main { min-width: 0; height: 100%; padding: 50px 25px 0 16px; box-sizing: border-box; display: flex; flex-direction: column; }
    .main h1 { display: flex; align-items: center; gap: 20px; padding-left: 12px; font-size: 40px; line-height: 52px; font-weight: 700; color: #262a36; }
    .title-pic { width: 38px; height: 40px; }
    .main .rule { margin: 51px 0 31px; }
    .metrics { display: grid; grid-template-columns: repeat(3, 1fr); gap: 16px; }
    .metric { font-size: 13px; line-height: 24px; }
    .metric strong { display: block; margin-top: 1px; font-size: 32px; line-height: 44px; font-weight: 400; }
    .main h2 { display: flex; align-items: center; gap: 14px; margin: 33px 0 16px; padding-left: 8px; font-size: 25px; line-height: 36px; font-weight: 500; }
    .main h2 .pic { width: 22px; height: 28px; }
    .cards { display: grid; grid-template-columns: repeat(4, 1fr); gap: 16px; }
    .card { padding: 24px 15px 38px; border: 1px solid #dedfe2; border-top: 4px solid var(--tone); border-radius: 8px; box-shadow: 0 2px 4px rgba(0, 0, 0, 0.1); font-size: 12px; line-height: 26px; }
    .card h3 { margin-bottom: 15px; font-size: 25px; line-height: 36px; font-weight: 500; color: var(--tone); }
    .low { --tone: #1fa53f; }
    .moderate { --tone: #ffc107; }
    .high { --tone: #ff7f0e; }
    .extreme { --tone: #dc3040; }
    .local { margin-bottom: 4px; font-style: italic; color: #666; }
    .advice { color: #d87400; }
    b { font-weight: 500; }
    risk-map { flex: 1; margin-top: 26px; }

    .top { position: absolute; top: 18px; right: 27px; display: flex; align-items: center; gap: 21px; font-size: 13px; line-height: 22px; }
    .top button { font-size: 13px; line-height: 22px; }
    .gh { width: 16px; height: 16px; fill: #1c2030; }
    .dots { width: 8px; height: 14px; fill: #1c2030; }
    .scroll { position: absolute; right: 1px; top: 60px; width: 6px; height: 520px; border-radius: 0 0 3px 3px; background: #aeaeb3; }
    .badge { position: absolute; right: 0; bottom: 0; display: grid; place-items: center; width: 65px; height: 44px; border-radius: 8px 0 0 0; background: #ff4b4b; }
    .crown { width: 26px; height: 15px; }
    .avatar { position: absolute; right: 84px; bottom: 5px; width: 32px; height: 32px; border-radius: 50%; box-shadow: 0 0 5px rgba(0, 0, 0, 0.25); }
  `;

  private drop(tag: string) {
    this.tags = this.tags.filter((t) => t !== tag);
  }

  render() {
    return html`
      <aside class="side">
        <h2>${tools}Tools &amp; Filter</h2>
        <button class="reset">${refresh}Reset Filter</button>
        <label class="field" for="from">Tanggal Awal</label>
        <input class="box" id="from" value="2008/11/01" />
        <label class="field" for="to">Tanggal Akhir</label>
        <input class="box" id="to" value="2025/10/01" />
        <span class="field" id="risk">Filter Risiko</span>
        <div class="multi" role="group" aria-labelledby="risk">
          <div class="tags">${this.tags.map((t) => html`<span class="tag">${t}<button aria-label="Hapus ${t}" @click=${() => this.drop(t)}>${cross}</button></span>`)}</div>
          <button class="icon" aria-label="Hapus semua"><svg class="clear" viewBox="0 0 14 14"><circle cx="7" cy="7" r="7" fill="#6f7078" /><path stroke="#fff" stroke-width="1.800" d="M4.500 4.500L9.500 9.500M9.500 4.500L4.500 9.500" /></svg></button>
          <button class="icon" aria-label="Buka pilihan"><svg class="chev" viewBox="0 0 12 8"><path fill="none" stroke="#1c2030" stroke-width="2.200" d="M1.500 1.500L6 6L10.500 1.500" /></svg></button>
        </div>
        <hr class="rule" />
        <h3>${bolt}Prediksi Manual</h3>
        <p class="hint">Klik peta untuk atur lokasi (Ganti Lat/Lon Manual):</p>
        <pick-map></pick-map>
        <p class="picked">${pushpin}<span>Terpilih: <b>0.0000, 0.0000</b></span></p>
        <label class="field mag" for="mag">Mag</label>
        <div class="number">
          <input class="box" id="mag" value="5.00" />
          <button class="icon" aria-label="Kurangi"><svg class="step off" viewBox="0 0 8 8"><path d="M0 4H8" /></svg></button>
          <button class="icon" aria-label="Tambah"><svg class="step" viewBox="0 0 8 8"><path d="M0 4H8M4 0V8" /></svg></button>
        </div>
      </aside>
      <main class="main">
        <h1>${volcano}Earthquake Risk Viewer</h1>
        <hr class="rule" />
        <section class="metrics">${metrics.map(([k, v]) => html`<div class="metric">${k}<strong>${v}</strong></div>`)}</section>
        <h2>${clipboard}Informasi Kategori Risiko Bahaya Gempa Bumi &amp; Rekomendasi</h2>
        <section class="cards">${risks.map((r) => html`<article class="card ${r.tone}">
          <h3>${r.name}</h3><p class="local">${r.local}</p><p><b>Efek:</b> ${r.effect}</p><p class="advice"><b>Saran:</b> ${r.advice}</p></article>`)}</section>
        <risk-map></risk-map>
      </main>
      <nav class="top">
        <button class="icon">Fork</button>
        <button class="icon" aria-label="GitHub"><svg class="gh" viewBox="0 0 16 16"><path d="M8 0C3.580 0 0 3.580 0 8c0 3.540 2.290 6.530 5.470 7.590.4.070.55-.17.55-.38 0-.19-.01-.82-.01-1.490-2.010.37-2.530-.49-2.690-.94-.09-.23-.48-.94-.82-1.130-.28-.15-.68-.52-.01-.53.63-.01 1.080.58 1.230.82.72 1.210 1.870.87 2.330.66.070-.52.28-.87.51-1.070-1.780-.2-3.640-.89-3.640-3.950 0-.87.31-1.590.82-2.150-.08-.2-.36-1.020.08-2.120 0 0 .67-.21 2.200.82a7.400 7.400 0 0 1 4 0c1.530-1.040 2.200-.82 2.200-.82.44 1.100.16 1.920.08 2.120.51.56.82 1.270.82 2.150 0 3.070-1.870 3.750-3.650 3.950.29.25.54.73.54 1.480 0 1.070-.01 1.930-.01 2.200 0 .21.15.46.55.38A8.010 8.010 0 0 0 16 8c0-4.420-3.580-8-8-8Z" /></svg></button>
        <button class="icon" aria-label="Menu"><svg class="dots" viewBox="0 0 8 14"><circle cx="4" cy="2" r="1.700" /><circle cx="4" cy="7" r="1.700" /><circle cx="4" cy="12" r="1.700" /></svg></button>
      </nav>
      <div class="scroll"></div>
      <svg class="avatar" viewBox="0 0 32 32" role="img" aria-label="Profil"><defs><clipPath id="round"><circle cx="16" cy="16" r="16" /></clipPath></defs>
        <g clip-path="url(#round)"><rect width="32" height="32" fill="#b9cfdf" /><path fill="#b08f7c" d="M0 22L9 18L12 24L8 32H0ZM32 20L25 18L23 24L26 32H32Z" /><ellipse cx="18" cy="14" rx="7" ry="7" fill="#cdab98" />
        <path fill="#5b8fbf" d="M3 12Q4 2 15 1Q26 0 28 9Q28 15 25 15Q24 9 20 10Q13 8 11 12Q9 17 6 15Z" /><path fill="#8fc0e4" d="M6 6L11 4L12 8L17 3L22 5L20 9L13 9L8 10Z" />
        <path fill="#8d8584" d="M9 20Q16 23 26 18L27 23Q17 27 9 24Z" /><path fill="#26355f" d="M10 23Q18 25 26 20L27 28Q18 33 11 28Z" /><path fill="none" stroke="#8fa6d0" d="M13 25L18 28L23 24" /><path stroke="#5a3d35" d="M14 14.500H17M20 14.500H23" /></g></svg>
      <a class="badge" href="#hosted" aria-label="Streamlit"><svg class="crown" viewBox="0 0 26 15"><path fill="#fff" d="M0 2Q0 1 1 1.500L8.500 6L12.500 0.500Q13 0 13.500 0.500L17.500 6L25 1.500Q26 1 26 2L22 14Q21.500 15 20.500 15H5.500Q4.500 15 4 14Z" /><path fill="#ffd0d0" d="M8.500 6L13 11L17.500 6L20 10L13 14.500L4 5Z" opacity=".6" /></svg></a>
    `;
  }
}
